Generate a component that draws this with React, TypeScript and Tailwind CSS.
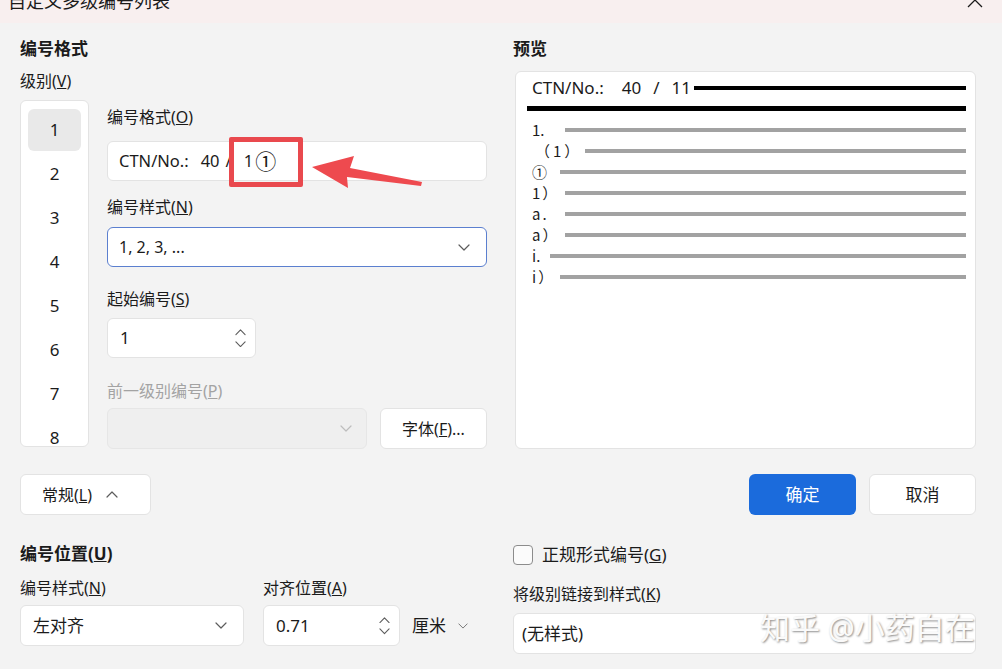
import React from 'react';

const Chevron = ({ up = false, color = '#5c5c5c', w = 12 }: { up?: boolean; color?: string; w?: number }) => (
    <svg width={w} height={w / 2 + 1} viewBox="0 0 12 7" fill="none">
        <polyline
            points={up ? '1,6 6,1 11,6' : '1,1 6,6 11,1'}
            stroke={color}
            strokeWidth="1.2"
            strokeLinecap="round"
            strokeLinejoin="round"
        />
    </svg>
);

const Spinner = () => (
    <div className="flex flex-col items-center gap-[5px]">
        <Chevron up w={11} />
        <Chevron w={11} />
    </div>
);

const Label = ({ children, className = '' }: { children: React.ReactNode; className?: string }) => (
    <div className={`text-[16px] leading-[24px] text-[#1b1b1b] ${className}`}>{children}</div>
);

const levels = [1, 2, 3, 4, 5, 6, 7, 8];

const previewRows = [
    { label: '1.', pad: 'pl-[5px]', lead: 'w-[38px]' },
    { label: '（1）', pad: 'pl-[8px] tracking-[3px]', lead: 'w-[58px]' },
    { label: '①', pad: 'pl-[5px]', lead: 'w-[33px]' },
    { label: '1）', pad: 'pl-[5px] tracking-[2px]', lead: 'w-[38px]' },
    { label: 'a.', pad: 'pl-[5px] tracking-[2px]', lead: 'w-[38px]' },
    { label: 'a）', pad: 'pl-[5px] tracking-[2px]', lead: 'w-[38px]' },
    { label: 'i.', pad: 'pl-[5px]', lead: 'w-[23px]' },
    { label: 'i）', pad: 'pl-[5px] tracking-[2px]', lead: 'w-[33px]' },
];

const box = 'bg-white border border-[#e3e3e3] rounded-[6px]';

export default function App() {
    return (
        <div className="relative w-[1002px] h-[669px] overflow-hidden bg-[#f3f3f3] font-['Noto_Sans','Noto_Sans_CJK_SC',sans-serif] text-[#1b1b1b]">
            {/* title bar */}
            <div className="h-[23px] bg-[#f8efef] flex justify-between pl-[8px] pr-[19px] overflow-hidden">
                <span className="text-[18px] leading-[20px] -mt-[9px] text-[#1a1a1a]">自定义多级编号列表</span>
                <svg width="16" height="16" viewBox="0 0 16 16" className="-mt-[8px]">
                    <path d="M1 1 L15 15 M15 1 L1 15" stroke="#1a1a1a" strokeWidth="1.3" />
                </svg>
            </div>

            <div className="pl-[20px] pr-[26px] pt-[14px]">
                <div className="grid grid-cols-[467px_463px] gap-x-[26px]">
                    {/* left: numbering format */}
                    <div>
                        <div className="text-[17px] leading-[24px] font-bold">编号格式</div>
                        <Label className="mt-[8px]">
                            级别(<span className="underline">V</span>)
                        </Label>
                        <div className="flex gap-[18px] mt-[7px]">
                            <div className={`${box} w-[69px] h-[347px] overflow-hidden pt-[7px]`}>
                                {levels.map((n) => (
                                    <div key={n} className="h-[44px] px-[7px] py-[1px]">
                                        <div
                                            className={`h-full rounded-[6px] flex items-center justify-center text-[17px] ${
                                                n === 1 ? 'bg-[#e9e9e9]' : ''
                                            }`}
                                        >
                                            {n}
                                        </div>
                                    </div>
                                ))}
                            </div>

                            <div className="flex-1">
                                <Label className="mt-[5px]">
                                    编号格式(<span className="underline">O</span>)
                                </Label>
                                <div className={`${box} h-[40px] mt-[12px] flex items-center px-[11px] text-[16.5px]`}>
                                    <span>CTN/No.:</span>
                                    <span className="ml-[12px]">40</span>
                                    <span className="ml-[6px]">/</span>
                                    <span className="ml-[12px]">1</span>
                                    <span className="ml-[2px] text-[21px] leading-[22px]">①</span>
                                </div>

                                <Label className="mt-[14px]">
                                    编号样式(<span className="underline">N</span>)
                                </Label>
                                <div className="h-[40px] mt-[8px] bg-white border border-[#5b7fcf] rounded-[6px] flex items-center justify-between pl-[11px] pr-[16px]">
                                    <span className="text-[16px]">1, 2, 3, ...</span>
                                    <Chevron />
                                </div>

                                <Label className="mt-[20px]">
                                    起始编号(<span className="underline">S</span>)
                                </Label>
                                <div className={`${box} w-[149px] h-[40px] mt-[7px] flex items-center justify-between pl-[12px] pr-[9px]`}>
                                    <span className="text-[17px]">1</span>
                                    <Spinner />
                                </div>

                                <Label className="mt-[21px] text-[#a3a3a3]">
                                    前一级别编号(<span className="underline">P</span>)
                                </Label>
                                <div className="flex gap-[13px] mt-[5px]">
                                    <div className="w-[260px] h-[41px] bg-[#efefef] border border-[#e6e6e6] rounded-[6px] flex items-center justify-end pr-[14px]">
                                        <Chevron color="#bdbdbd" />
                                    </div>
                                    <div className={`${box} flex-1 h-[41px] flex items-center justify-center text-[16px]`}>
                                        字体(<span className="underline">F</span>)...
                                    </div>
                                </div>
                            </div>
                        </div>
                    </div>

                    {/* right: preview */}
                    <div>
                        <div className="text-[17px] leading-[24px] font-bold">预览</div>
                        <div className={`${box} ml-[2px] h-[378px] mt-[10px] pl-[11px] pr-[9px] pt-[4px]`}>
                            <div className="flex items-center h-[24px] pl-[5px] text-[17px]">
                                <span>CTN/No.:</span>
                                <span className="ml-[18px]">40</span>
                                <span className="ml-[12px]">/</span>
                                <span className="ml-[12px]">11</span>
                                <div className="flex-1 h-[4px] bg-black ml-[3px]" />
                            </div>
                            <div className="h-[5px] bg-black mt-[6px]" />
                            <div className="mt-[8px] font-['Noto_Sans_CJK_SC',sans-serif] text-[15px]">
                                {previewRows.map((r) => (
                                    <div key={r.label} className="flex items-center h-[21px]">
                                        <span className={`${r.lead} ${r.pad} shrink-0 leading-[18px]`}>{r.label}</span>
                                        <div className="flex-1 h-[4px] bg-[#a2a2a2]" />
                                    </div>
                                ))}
                            </div>
                        </div>
                    </div>
                </div>

                {/* button row */}
                <div className="flex justify-between items-start mt-[25px]">
                    <div className={`${box} w-[131px] h-[41px] flex items-center gap-[14px] pl-[21px]`}>
                        <span className="text-[16px]">
                            常规(<span className="underline">L</span>)
                        </span>
                        <Chevron up />
                    </div>
                    <div className="flex gap-[13px]">
                        <div className="w-[107px] h-[41px] rounded-[6px] bg-[#1b6bdc] text-white text-[17px] flex items-center justify-center">
                            确定
                        </div>
                        <div className={`${box} w-[107px] h-[41px] text-[17px] flex items-center justify-center`}>
                            取消
                        </div>
                    </div>
                </div>

                {/* numbering position */}
                <div className="grid grid-cols-[467px_463px] gap-x-[26px] mt-[27px]">
                    <div>
                        <div className="text-[17px] leading-[24px] font-bold">
                            编号位置(<span className="underline">U</span>)
                        </div>
                        <div className="flex gap-[19px] mt-[10px]">
                            <div>
                                <Label>
                                    编号样式(<span className="underline">N</span>)
                                </Label>
                                <div className={`${box} w-[224px] h-[41px] mt-[5px] flex items-center justify-between pl-[12px] pr-[16px]`}>
                                    <span className="text-[17px]">左对齐</span>
                                    <Chevron />
                                </div>
                            </div>
                            <div>
                                <Label>
                                    对齐位置(<span className="underline">A</span>)
                                </Label>
                                <div className="flex items-center mt-[5px] gap-[12px]">
                                    <div className={`${box} w-[137px] h-[41px] flex items-center justify-between pl-[12px] pr-[9px]`}>
                                        <span className="text-[17px]">0.71</span>
                                        <Spinner />
                                    </div>
                                    <span className="text-[17px]">厘米</span>
                                    <Chevron w={10} color="#7a7a7a" />
                                </div>
                            </div>
                        </div>
                    </div>

                    <div>
                        <div className="flex items-center gap-[9px] h-[24px] mt-[1px]">
                            <div className="w-[20px] h-[20px] rounded-[4px] border border-[#8c8c8c] bg-[#fbfbfb]" />
                            <span className="text-[17px]">
                                正规形式编号(<span className="underline">G</span>)
                            </span>
                        </div>
                        <Label className="mt-[15px]">
                            将级别链接到样式(<span className="underline">K</span>)
                        </Label>
                        <div className={`${box} h-[41px] mt-[7px] flex items-center pl-[8px]`}>
                            <span className="text-[17px]">(无样式)</span>
                        </div>
                    </div>
                </div>
            </div>

            {/* highlight box and arrow */}
            <div className="absolute left-[229px] top-[137px] w-[74px] h-[50px] border-[5px] border-[#e9494e] rounded-[2px]" />
            <svg className="absolute left-0 top-0" width="1002" height="669" viewBox="0 0 1002 669" fill="none">
                <polygon points="312,167 354,156 350,168 422,182 421,186 347,177 348,188" fill="#ee4a4f" />
            </svg>

            {/* watermark */}
            <div className="absolute left-[760px] top-[608px] text-[30px] leading-[40px] text-[#fafafa] [text-shadow:1px_1px_2px_rgba(0,0,0,0.45)] whitespace-pre">
                知乎 @小药自在
            </div>
        </div>
    );
}
